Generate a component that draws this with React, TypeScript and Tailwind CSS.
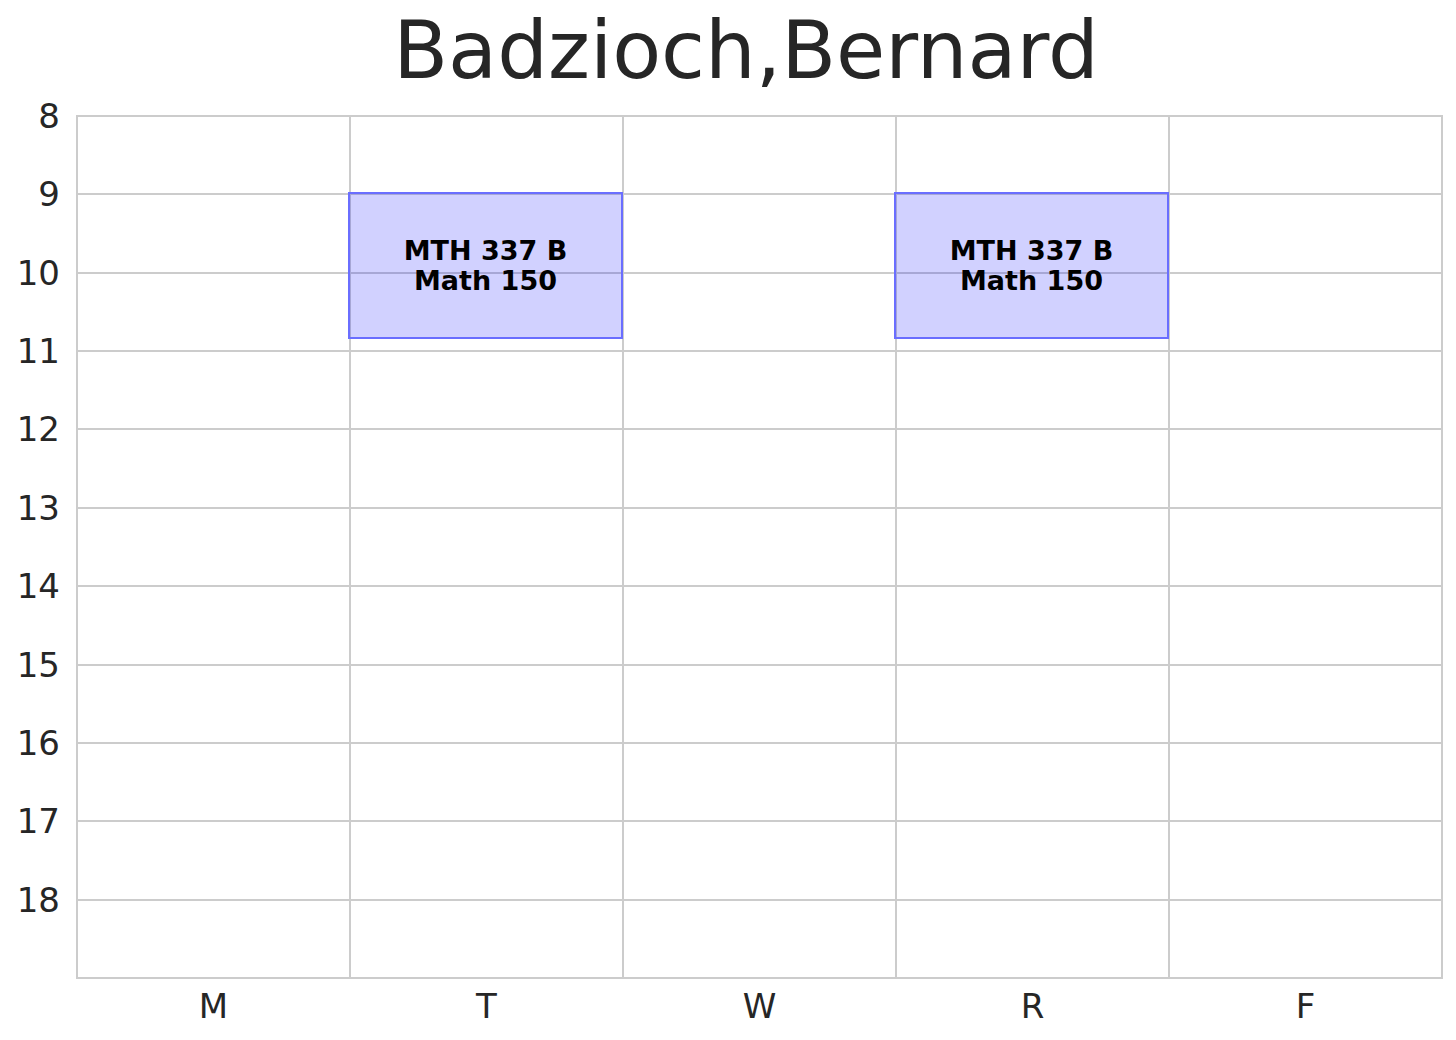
import React from "react";

const hours = [8, 9, 10, 11, 12, 13, 14, 15, 16, 17, 18];
const days = ["M", "T", "W", "R", "F"];

function EventBox({ left }: { left: string }) {
  return (
    <div
      className={`absolute top-[75px] h-[147px] w-[275px] ${left} border-2 border-[#6a6eff] bg-[rgba(0,0,255,0.18)] flex flex-col items-center justify-center text-black font-bold text-[27px] leading-[30px]`}
    >
      <div>MTH 337 B</div>
      <div>Math 150</div>
    </div>
  );
}

export default function App() {
  return (
    <div
      className="w-[1456px] h-[1040px] bg-white text-[#262626] overflow-hidden"
      style={{ fontFamily: '"DejaVu Sans", "Liberation Sans", sans-serif' }}
    >
      <div className="pt-[11px] pl-[36px] h-[115px] text-center text-[80px] leading-none">
        Badzioch,Bernard
      </div>
      <div className="flex">
        <div className="w-[76px] pt-[2px] pr-[16px] grid grid-rows-[repeat(11,76.36px)] gap-y-[2px] text-[34px] leading-none">
          {hours.map((h) => (
            <div key={h} className="relative">
              <div className="absolute right-0 top-[-1px] -translate-y-1/2">{h}</div>
            </div>
          ))}
        </div>
        <div className="flex flex-col">
          <div className="relative w-[1367px] h-[864px] border-2 border-[#cccccc] bg-[#cccccc] grid grid-cols-5 grid-rows-[repeat(11,1fr)] gap-[2px]">
            {Array.from({ length: 55 }).map((_, i) => (
              <div key={i} className="bg-white" />
            ))}
            <EventBox left="left-[270px]" />
            <EventBox left="left-[816px]" />
          </div>
          <div className="grid grid-cols-5 px-[2px] gap-x-[2px] pt-[10px] text-[34px] leading-none">
            {days.map((d) => (
              <div key={d} className="text-center">
                {d}
              </div>
            ))}
          </div>
        </div>
      </div>
    </div>
  );
}
